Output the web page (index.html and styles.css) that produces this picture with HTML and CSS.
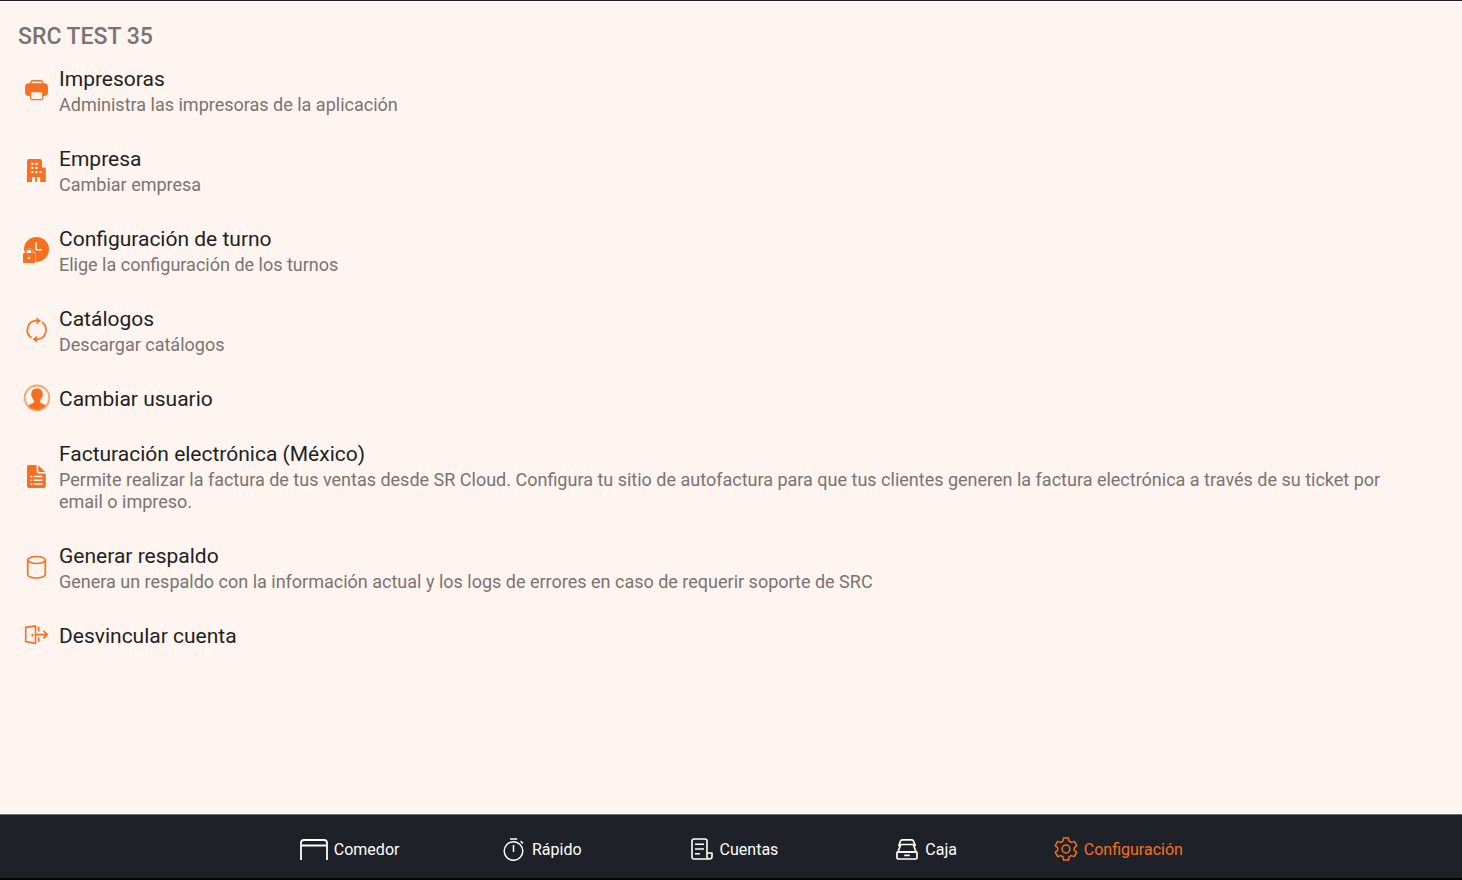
FILE: index.html
```
<!DOCTYPE html>
<html lang="es">
<head>
  <meta charset="UTF-8">
  <meta name="viewport" content="width=device-width, initial-scale=1.0">
  <title>Configuración</title>
  <link rel="stylesheet" href="styles.css">
</head>
<body>
  <main class="content">
    <h1>SRC TEST 35</h1>
    <div class="settings">
      <button type="button" class="item">
        <svg class="icon" viewBox="0 0 28 28">
          <rect x="8.8" y="4.7" width="11.8" height="6" rx="2" fill="none" stroke="currentColor" stroke-width="1.4"/>
          <rect x="3" y="7.2" width="23" height="12.8" rx="4" fill="currentColor"/>
          <rect x="8.6" y="15.6" width="12.2" height="8" rx="1.5" fill="#fff5f0" stroke="currentColor" stroke-width="1.2"/>
        </svg>
        <span class="texts">
          <span class="title">Impresoras</span>
          <span class="desc">Administra las impresoras de la aplicación</span>
        </span>
      </button>
      <button type="button" class="item">
        <svg class="icon" viewBox="0 0 28 28">
          <path fill="currentColor" d="M7 3h11a2 2 0 0 1 2 2v6.5h2a1.8 1.8 0 0 1 1.8 1.8V26H5V5a2 2 0 0 1 2-2z"/>
          <g fill="#fff5f0">
            <rect x="9.2" y="6.8" width="2.2" height="2.2"/><rect x="13.3" y="6.8" width="2.2" height="2.2"/>
            <rect x="9.2" y="10.9" width="2.2" height="2.2"/><rect x="13.3" y="10.9" width="2.2" height="2.2"/>
            <rect x="9.2" y="15" width="2.2" height="2.2"/><rect x="13.3" y="15" width="2.2" height="2.2"/><rect x="17.4" y="15" width="2.2" height="2.2"/>
            <rect x="10" y="21" width="3.2" height="5"/><rect x="15" y="21" width="3.2" height="5"/>
          </g>
        </svg>
        <span class="texts">
          <span class="title">Empresa</span>
          <span class="desc">Cambiar empresa</span>
        </span>
      </button>
      <button type="button" class="item">
        <svg class="icon" viewBox="0 0 28 28">
          <circle cx="14.5" cy="13.4" r="12.5" fill="currentColor"/>
          <path d="M14 6.3v7.5h6" fill="none" stroke="#fff5f0" stroke-width="1.6"/>
          <path d="M0 28V16.600h2.500a4.500 4.500 0 0 1 9 0h1.900V28z" fill="#fff5f0"/>
          <path d="M3.900 18v-2a3.100 3.100 0 0 1 6.200 0v2" fill="none" stroke="currentColor" stroke-width="1.500"/>
          <rect x="1" y="17" width="12" height="10" rx="1" fill="currentColor"/>
          <circle cx="7" cy="22" r="1.300" fill="#fff5f0"/>
        </svg>
        <span class="texts">
          <span class="title">Configuración de turno</span>
          <span class="desc">Elige la configuración de los turnos</span>
        </span>
      </button>
      <button type="button" class="item">
        <svg class="icon" viewBox="0 0 28 28">
          <g fill="none" stroke="currentColor" stroke-width="1.7">
            <path d="M9.400 21.800A9.400 9.400 0 0 1 14 4.700h2"/>
            <path d="M20 6.200a9.400 9.400 0 0 1-4.600 17.100h-2"/>
          </g>
          <path fill="currentColor" d="M14 1.200l5 3.500-5 3.700 1-3.700zM15.500 19.600l-5 3.700 5 3.500-1-3.500z"/>
        </svg>
        <span class="texts">
          <span class="title">Catálogos</span>
          <span class="desc">Descargar catálogos</span>
        </span>
      </button>
      <button type="button" class="item">
        <svg class="icon" viewBox="0 0 28 28">
          <circle cx="15" cy="13.8" r="12.3" fill="none" stroke="#f9a06c" stroke-width="1.8"/>
          <path fill="currentColor" d="M15 4.400c3.500 0 5.600 1.800 5.600 5 0 .6.500 1 .2 2.200-.2.700-.5 1-.8 1.200-.4 1.600-1 2.700-1.800 3.500v2c.7 1.600 3.600 1.500 5.400 3.500A11.700 11.700 0 0 1 15 26a11.700 11.700 0 0 1-8.600-4.200c1.800-2 4.700-1.900 5.400-3.500v-2c-.8-.8-1.400-1.900-1.800-3.500-.3-.2-.6-.5-.8-1.200-.3-1.200.2-1.600.2-2.200 0-3.200 2.100-5 5.600-5z"/>
        </svg>
        <span class="texts">
          <span class="title">Cambiar usuario</span>
        </span>
      </button>
      <button type="button" class="item">
        <svg class="icon" viewBox="0 0 28 28">
          <path fill="currentColor" d="M7 3h7.600v6.600a2 2 0 0 0 2 2h7.200V24a2 2 0 0 1-2 2H7a2 2 0 0 1-2-2V5a2 2 0 0 1 2-2zM16.300 3.200l7 6.800h-6a1 1 0 0 1-1-1z"/>
          <path stroke="#fff5f0" stroke-width="1.500" d="M8.500 14.500h1.800M11.800 14.500h8.700M8.500 18.200h1.800M11.800 18.200h8.700M8.500 21.900h1.800M11.800 21.900h8.700"/>
        </svg>
        <span class="texts">
          <span class="title">Facturación electrónica (México)</span>
          <span class="desc">Permite realizar la factura de tus ventas desde SR Cloud. Configura tu sitio de autofactura para que tus clientes generen la factura electrónica a través de su ticket por email o impreso.</span>
        </span>
      </button>
      <button type="button" class="item">
        <svg class="icon" viewBox="0 0 28 28">
          <g fill="none" stroke="currentColor" stroke-width="1.700">
            <ellipse cx="14.500" cy="7" rx="8.800" ry="3.500"/>
            <path d="M5.700 7v14.500c0 2 3.900 3.500 8.800 3.500s8.800-1.500 8.800-3.500V7"/>
          </g>
        </svg>
        <span class="texts">
          <span class="title">Generar respaldo</span>
          <span class="desc">Genera un respaldo con la información actual y los logs de errores en caso de requerir soporte de SRC</span>
        </span>
      </button>
      <button type="button" class="item">
        <svg class="icon" viewBox="0 0 28 28">
          <g fill="none" stroke="currentColor" stroke-width="1.600">
            <path d="M3.700 6.400l9.800-1.500v17.500L3.700 20.600z"/>
            <path d="M16.700 5.500v5M16.700 16.500v4.500M13.500 13.600h11.500M21.500 9.800l3.700 3.800-3.700 3.800"/>
          </g>
          <circle cx="10.500" cy="14.200" r="1.200" fill="currentColor"/>
        </svg>
        <span class="texts">
          <span class="title">Desvincular cuenta</span>
        </span>
      </button>
    </div>
  </main>

  <nav class="bottom-nav">
    <div class="tabs">
      <a href="#comedor" class="tab">
        <svg class="tab-icon wide" viewBox="0 0 28 24">
          <path d="M1 23V6a3 3 0 0 1 3-3h20a3 3 0 0 1 3 3v17M1 8.500h26" fill="none" stroke="currentColor" stroke-width="1.800"/>
        </svg>
        Comedor
      </a>
      <a href="#rapido" class="tab">
        <svg class="tab-icon" viewBox="0 0 24 24">
          <g fill="none" stroke="currentColor" stroke-width="1.500">
            <circle cx="11.500" cy="14" r="9.300"/>
            <path d="M8 1.900h7.200M11.500 8v7M18.500 4.200l2.500 2.200"/>
          </g>
        </svg>
        Rápido
      </a>
      <a href="#cuentas" class="tab">
        <svg class="tab-icon" viewBox="0 0 24 24">
          <g fill="none" stroke="currentColor" stroke-width="1.600" stroke-linejoin="round">
            <path d="M17 16V4a2 2 0 0 0-2-2H4a2 2 0 0 0-2 2v16a2 2 0 0 0 2 2h15.500a2.500 2.500 0 0 0 2.500-2.500V16h-5v3.500a2.500 2.500 0 0 0 2.500 2.500"/>
            <path d="M5 7.200h9M5 12h9M5 16.800h5"/>
          </g>
        </svg>
        Cuentas
      </a>
      <a href="#caja" class="tab">
        <svg class="tab-icon" viewBox="0 0 24 24">
          <g fill="none" stroke="currentColor" stroke-width="1.700" stroke-linejoin="round">
            <path d="M5.500 8.500H3.800L5.500 4a2 2 0 0 1 1.700-1.200h9.600A2 2 0 0 1 18.500 4l1.700 4.500h-1.700"/>
            <path d="M5.800 7.500h12.400l2.800 7.300H3z"/>
            <rect x="2" y="14.800" width="20" height="7.200" rx="1.200"/>
            <path d="M9.200 18.400h5.600"/>
          </g>
        </svg>
        Caja
      </a>
      <a href="#configuracion" class="tab active" aria-current="page">
        <svg class="tab-icon" viewBox="0 0 24 24">
          <g fill="none" stroke="currentColor" stroke-width="1.500" stroke-linejoin="round">
            <path d="M9.600 1h4.800l.7 3.200 2 1.200 3.200-1 2.400 4.200-2.400 2.200v2.400l2.400 2.200-2.400 4.200-3.200-1-2 1.200-.7 3.200H9.600l-.7-3.200-2-1.200-3.200 1-2.400-4.200 2.400-2.200v-2.400L1.300 8.600l2.400-4.200 3.200 1 2-1.200z"/>
            <circle cx="12" cy="12" r="3.900"/>
          </g>
        </svg>
        Configuración
      </a>
    </div>
  </nav>
</body>
</html>
```

FILE: styles.css
```
* {
  box-sizing: border-box;
}

body {
  margin: 0;
  min-height: 100vh;
  display: flex;
  flex-direction: column;
  font-family: Roboto, Arial, sans-serif;
  background-color: #fff5f0;
  border-top: 1px solid #1e2128;
}

.content {
  flex: 1;
  padding: 22px 18px;
}

h1 {
  margin: 0 0 16px;
  font-size: 23px;
  line-height: 28px;
  font-weight: 500;
  color: #7b7370;
}

.settings {
  display: flex;
  flex-direction: column;
  gap: 31px;
}

.item {
  display: flex;
  align-items: center;
  gap: 9px;
  width: 100%;
  padding: 0 32px 0 4px;
  border: none;
  background: none;
  font-family: inherit;
  text-align: left;
  cursor: pointer;
}

.icon {
  flex: none;
  width: 28px;
  height: 28px;
  margin: -4px 0 -1px;
  color: #f57021;
}

.texts {
  display: flex;
  flex-direction: column;
  gap: 3px;
}

.title {
  font-size: 21px;
  line-height: 24px;
  color: #211f1f;
}

.desc {
  font-size: 18px;
  line-height: 22px;
  color: #7b7370;
}

.bottom-nav {
  height: 66px;
  padding: 7px 0 0 6px;
  background-color: #1e2128;
  border-top: 1px solid #6b6a6b;
  border-bottom: 2px solid #050608;
}

.tabs {
  display: grid;
  grid-template-columns: repeat(5, 1fr);
  width: 66%;
  height: 100%;
  margin: 0 auto;
}

.tab {
  display: flex;
  align-items: center;
  justify-content: center;
  gap: 6px;
  font-size: 16px;
  line-height: 20px;
  color: #fff;
  text-decoration: none;
}

.tab.active {
  color: #f57021;
}

.tab-icon {
  width: 24px;
  height: 24px;
  margin-bottom: 3px;
}

.tab-icon.wide {
  width: 28px;
}
```
